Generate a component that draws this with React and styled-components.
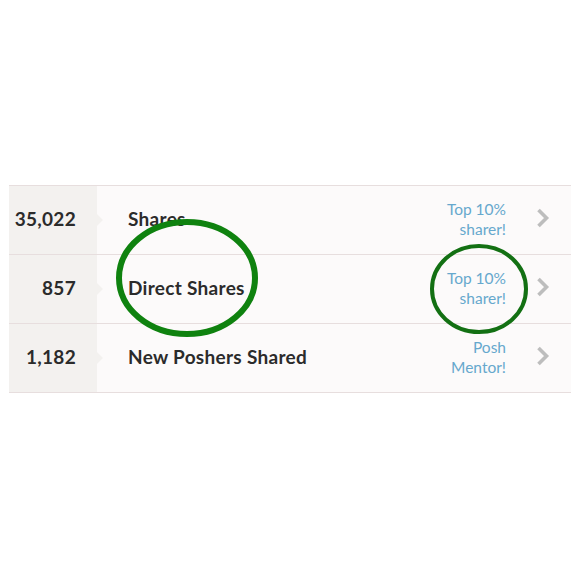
import React from "react";
import styled, { createGlobalStyle } from "styled-components";

const Global = createGlobalStyle`
  html, body { margin: 0; padding: 0; background: #ffffff; }
  body { font-family: "Lato", "Liberation Sans", sans-serif; }
`;

const Page = styled.div`
  position: relative;
  width: 580px;
  height: 580px;
  padding-top: 185px;
  box-sizing: border-box;
`;

const Table = styled.div`
  margin-left: 9px;
  width: 562px;
  border-top: 1px solid #e7dede;
  display: flex;
  flex-direction: column;
`;

const Row = styled.div`
  display: grid;
  grid-template-columns: 88px 1fr;
  height: 68px;
  border-bottom: 1px solid #e7dede;
`;

const NumberCell = styled.div`
  position: relative;
  background: #f3f1ef;
  display: flex;
  align-items: center;
  justify-content: flex-end;
  padding-right: 21px;
  padding-bottom: 4px;
  font-weight: 700;
  font-size: 19px;
  letter-spacing: 0.3px;
  color: #2b2b2b;
  &::after {
    content: "";
    position: absolute;
    right: -6px;
    top: 50%;
    margin-top: -6px;
    border-left: 6px solid #f3f1ef;
    border-top: 6px solid transparent;
    border-bottom: 6px solid transparent;
  }
`;

const Main = styled.div`
  background: #fcfafa;
  display: flex;
  align-items: center;
  padding-left: 31px;
  padding-right: 21px;
`;

const Label = styled.div`
  flex: 1;
  font-weight: 700;
  font-size: 19px;
  letter-spacing: 0.3px;
  color: #2b2b2b;
  padding-bottom: 4px;
`;

const Badge = styled.div`
  text-align: right;
  font-size: 15.5px;
  line-height: 20px;
  color: #66a8cd;
  margin-right: 30px;
  padding-bottom: 2px;
`;

const Chevron = styled.svg`
  width: 14px;
  height: 20px;
  display: block;
  margin-bottom: 4px;
`;

const Overlay = styled.svg`
  position: absolute;
  left: 0;
  top: 0;
  width: 580px;
  height: 580px;
  pointer-events: none;
`;

const rows = [
  { n: "35,022", label: "Shares", badge: ["Top 10%", "sharer!"] },
  { n: "857", label: "Direct Shares", badge: ["Top 10%", "sharer!"] },
  { n: "1,182", label: "New Poshers Shared", badge: ["Posh", "Mentor!"] },
];

export default function App() {
  return (
    <>
      <Global />
      <Page>
        <Table>
          {rows.map((r) => (
            <Row key={r.label}>
              <NumberCell>{r.n}</NumberCell>
              <Main>
                <Label>{r.label}</Label>
                <Badge>
                  {r.badge[0]}
                  <br />
                  {r.badge[1]}
                </Badge>
                <Chevron viewBox="0 0 14 20">
                  <path d="M2.5 2 L10.5 10 L2.5 18" fill="none" stroke="#bdbdbd" strokeWidth="3.6" strokeLinecap="butt" strokeLinejoin="miter" />
                </Chevron>
              </Main>
            </Row>
          ))}
        </Table>
        <Overlay viewBox="0 0 580 580">
          <ellipse cx="187" cy="278" rx="68" ry="56" fill="none" stroke="#0f820f" strokeWidth="6" />
          <ellipse cx="479" cy="289" rx="47" ry="43" fill="none" stroke="#137013" strokeWidth="4" />
        </Overlay>
      </Page>
    </>
  );
}
